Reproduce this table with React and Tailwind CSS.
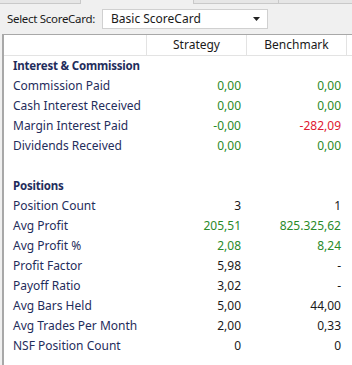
import React from "react";

const sections = [
  {
    title: "Interest & Commission",
    rows: [
      { label: "Commission Paid", s: "0,00", b: "0,00", sc: "g", bc: "g" },
      { label: "Cash Interest Received", s: "0,00", b: "0,00", sc: "g", bc: "g" },
      { label: "Margin Interest Paid", s: "-0,00", b: "-282,09", sc: "g", bc: "r" },
      { label: "Dividends Received", s: "0,00", b: "0,00", sc: "g", bc: "g" },
    ],
  },
  {
    title: "Positions",
    rows: [
      { label: "Position Count", s: "3", b: "1", sc: "k", bc: "k" },
      { label: "Avg Profit", s: "205,51", b: "825.325,62", sc: "g", bc: "g" },
      { label: "Avg Profit %", s: "2,08", b: "8,24", sc: "g", bc: "g" },
      { label: "Profit Factor", s: "5,98", b: "-", sc: "k", bc: "k" },
      { label: "Payoff Ratio", s: "3,02", b: "-", sc: "k", bc: "k" },
      { label: "Avg Bars Held", s: "5,00", b: "44,00", sc: "k", bc: "k" },
      { label: "Avg Trades Per Month", s: "2,00", b: "0,33", sc: "k", bc: "k" },
      { label: "NSF Position Count", s: "0", b: "0", sc: "k", bc: "k" },
    ],
  },
];

const tone = {
  g: "text-[#2a8a2a]",
  r: "text-[#e0182f]",
  k: "text-[#1a1a1a]",
};

function Row({ label, s, b, sc, bc }) {
  return (
    <div className="flex h-[20px] items-center">
      <div className="w-[143px] pl-[9px] text-[#1f2d5c] whitespace-nowrap">{label}</div>
      <div className={`w-[100px] pr-[6px] text-right ${tone[sc]}`}>{s}</div>
      <div className={`w-[100px] pr-[6px] text-right ${tone[bc]}`}>{b}</div>
    </div>
  );
}

export default function App() {
  return (
    <div className="w-[352px] h-[365px] overflow-hidden bg-[#f0f0f0] font-['Segoe_UI','Noto_Sans','Open_Sans',sans-serif] text-[12px] flex flex-col">
      {/* tab strip, only the bottoms show */}
      <div className="flex h-[4px] shrink-0">
        <div className="w-[81px] bg-[#e6e6e6] border-r border-b border-[#c9c9c9]" />
        <div className="w-[112px] bg-[#f0f0f0]" />
        <div className="w-[86px] bg-[#e6e6e6] border-l border-r border-b border-[#c9c9c9]" />
        <div className="flex-1 bg-[#e6e6e6] border-b border-[#c9c9c9]" />
      </div>

      <div className="flex items-center h-[30px] shrink-0 pl-[7px]">
        <span className="w-[95px] whitespace-nowrap text-[#1a1a1a] text-[11.5px] tracking-[-0.3px]">Select ScoreCard:</span>
        <div className="w-[166px] h-[20px] bg-white border border-[#d0d0d0] flex items-center pl-[8px] pr-[7px] text-[#1a1a1a]">
          <span className="flex-1">Basic ScoreCard</span>
          <svg width="7" height="4" viewBox="0 0 7 4">
            <path d="M0 0h7L3.5 4z" fill="#222" />
          </svg>
        </div>
      </div>

      <div className="flex-1 ml-[2px] bg-white border-l-2 border-t border-[#a8a8a8] flex flex-col">
        <div className="flex h-[21px] border-b border-[#e3e3e3] shrink-0 text-[#1a1a1a]">
          <div className="w-[143px] border-r border-[#e3e3e3]" />
          <div className="w-[100px] border-r border-[#e3e3e3] flex items-center justify-center">Strategy</div>
          <div className="w-[100px] border-r border-[#e3e3e3] flex items-center justify-center">Benchmark</div>
        </div>
        <div className="flex flex-col">
          {sections.map((sec, i) => (
            <div key={sec.title} className={i > 0 ? "mt-[20px]" : ""}>
              <div className="h-[20px] flex items-center pl-[9px] font-bold text-[11.5px] tracking-[-0.2px] text-[#1f2d5c]">
                {sec.title}
              </div>
              {sec.rows.map((r) => (
                <Row key={r.label} {...r} />
              ))}
            </div>
          ))}
        </div>
      </div>
    </div>
  );
}
